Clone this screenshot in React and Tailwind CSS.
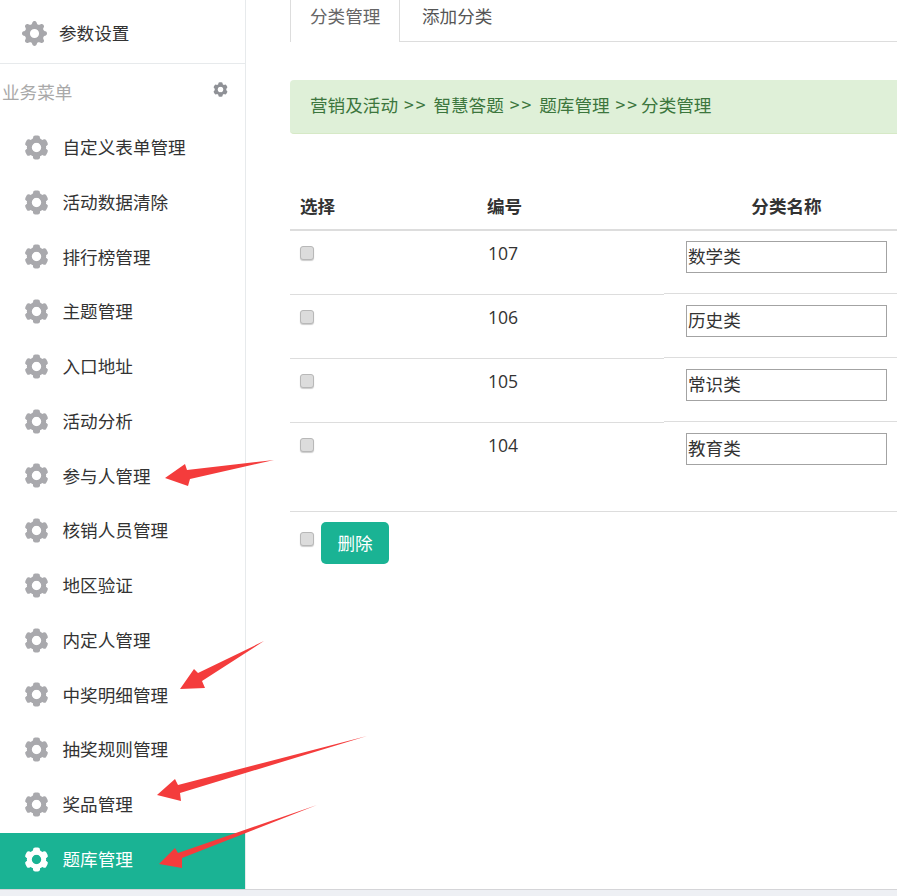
import { BsGearFill } from 'react-icons/bs';

const menuItems = ['自定义表单管理', '活动数据清除', '排行榜管理', '主题管理', '入口地址', '活动分析', '参与人管理', '核销人员管理', '地区验证', '内定人管理', '中奖明细管理', '抽奖规则管理', '奖品管理'];

const rows = [
  { id: 107, name: '数学类' },
  { id: 106, name: '历史类' },
  { id: 105, name: '常识类' },
];

// six lobed gear used all over the side menu
const Cog = ({ className = '' }) => (
  <svg viewBox="0 0 25 25" fill="currentColor" className={className}>
    <circle cx="12.5" cy="12.5" r="7.2" fill="none" stroke="currentColor" strokeWidth="5" />
    {[0, 60, 120, 180, 240, 300].map((deg) => (
      <rect key={deg} x="9" y="0.5" width="7" height="7" rx="2.2" transform={`rotate(${deg} 12.5 12.5)`} />
    ))}
  </svg>
);

const Check = ({ className = '' }) => (
  <input type="checkbox" className={`appearance-none block w-[14px] h-[14px] rounded-[3px] border border-[#b8b8b8] bg-[#dcdcdc] shadow-[0_1px_1px_rgba(0,0,0,0.2)] ${className}`} />
);

const NameInput = ({ value }) => (
  <input readOnly value={value} className="block w-[201px] h-[32px] mt-[10px] mx-auto border border-[#a3a3a3] px-[1px] pb-[3px] text-[17.6px] text-[#333] outline-none" />
);

const Sep = ({ children }) => <span className="tracking-[2px] mx-[2px]">{children}</span>;

const App = () => {
  return (
    <div className="relative h-[896px] w-[897px] overflow-hidden bg-white text-[17.6px] text-[#333] font-['Noto_Sans_CJK_SC',sans-serif]">
      <div className="flex h-[889px]">
        <aside className="w-[246px] shrink-0 border-r border-[#e7eaec]">
          <div className="h-[64px] flex items-center pl-[22px] pt-[4px] border-b border-[#e7eaec]">
            <BsGearFill className="w-[25px] h-[25px] text-[#a7a7ab]" />
            <span className="ml-[12px]">参数设置</span>
          </div>
          <div className="h-[56px] flex items-center justify-between pl-[2px] pr-[17px] text-[#a9a9a9]">
            <span>业务菜单</span>
            <Cog className="w-[15px] h-[15px] mb-[6px] text-[#8f9196]" />
          </div>
          {menuItems.map((item) => (
            <div key={item} className="h-[54.75px] flex items-center pl-[24px]">
              <Cog className="w-[25px] h-[25px] text-[#a9a9ad]" />
              <span className="ml-[13.5px]">{item}</span>
            </div>
          ))}
          <div className="h-[56px] mt-[1px] flex items-center pl-[24px] pb-[3px] bg-[#1ab394] text-white">
            <Cog className="w-[25px] h-[25px]" />
            <span className="ml-[13.5px]">题库管理</span>
          </div>
        </aside>
        <main className="w-[651px] shrink-0 ml-[44px]">
          <div className="h-[42px] flex border-b border-[#dddddd]">
            <div className="w-[110px] h-[42px] pl-[19px] pt-[3px] bg-white border-x border-[#dddddd] text-[#666]">分类管理</div>
            <div className="pl-[22px] pt-[3px] text-[#555]">添加分类</div>
          </div>
          <div className="mt-[38px] h-[54px] flex items-center pl-[20px] pb-[2px] bg-[#dff0d8] border-b border-[#d6e9c6] rounded-l-[4px] text-[#3c763d] whitespace-pre">
            营销及活动 <Sep>&gt;&gt;</Sep> 智慧答题 <Sep>&gt;&gt;</Sep> 题库管理 <Sep>&gt;&gt;</Sep>分类管理
          </div>
          <div className="mt-[49px] h-[48px] flex items-center border-b-2 border-[#dddddd] font-bold">
            <div className="w-[187px] pl-[10px]">选择</div>
            <div className="w-[187px] pl-[10px]">编号</div>
            <div className="w-[245px] text-center">分类名称</div>
          </div>
          {rows.map((row) => (
            <div key={row.id} className="flex items-start">
              <div className="flex w-[374px] h-[64px] border-b border-[#dddddd]">
                <div className="w-[187px] pl-[10px] pt-[15px]"><Check /></div>
                <div className="w-[187px] pl-[11px] pt-[9px] font-['Open_Sans',sans-serif]">{row.id}</div>
              </div>
              <div className="w-[245px] h-[63px] border-b border-[#dddddd]">
                <NameInput value={row.name} />
              </div>
            </div>
          ))}
          <div className="flex h-[89px] border-b border-[#dddddd]">
            <div className="w-[187px] pl-[10px] pt-[15px]"><Check /></div>
            <div className="w-[187px] pl-[11px] pt-[9px] font-['Open_Sans',sans-serif]">104</div>
            <div className="w-[245px]"><NameInput value="教育类" /></div>
          </div>
          <div className="flex items-start pl-[10px] pt-[10px]">
            <Check className="mt-[10px]" />
            <button className="ml-[7px] w-[68px] h-[42px] rounded-[5px] bg-[#1ab394] text-white">删除</button>
          </div>
        </main>
      </div>
      <div className="h-[7px] bg-[#eef0f4] border-t border-[#d5d5d8]" />
      {/* red annotation arrows on top of the screenshot */}
      <svg className="absolute inset-0 pointer-events-none" width="897" height="896" viewBox="0 0 897 896">
        <g fill="#f43c3c">
          <polygon points="165,478 185,464 187,470 274,460 190,479 188,486" />
          <polygon points="180,689 194,669 198,673 264,641 202,681 205,688" />
          <polygon points="157,795 175,779 178,785 367,736 180,793 181,801" />
          <polygon points="159,864 175,848 178,853 317,805 182,858 182,868" />
        </g>
      </svg>
    </div>
  );
};

export default App;
